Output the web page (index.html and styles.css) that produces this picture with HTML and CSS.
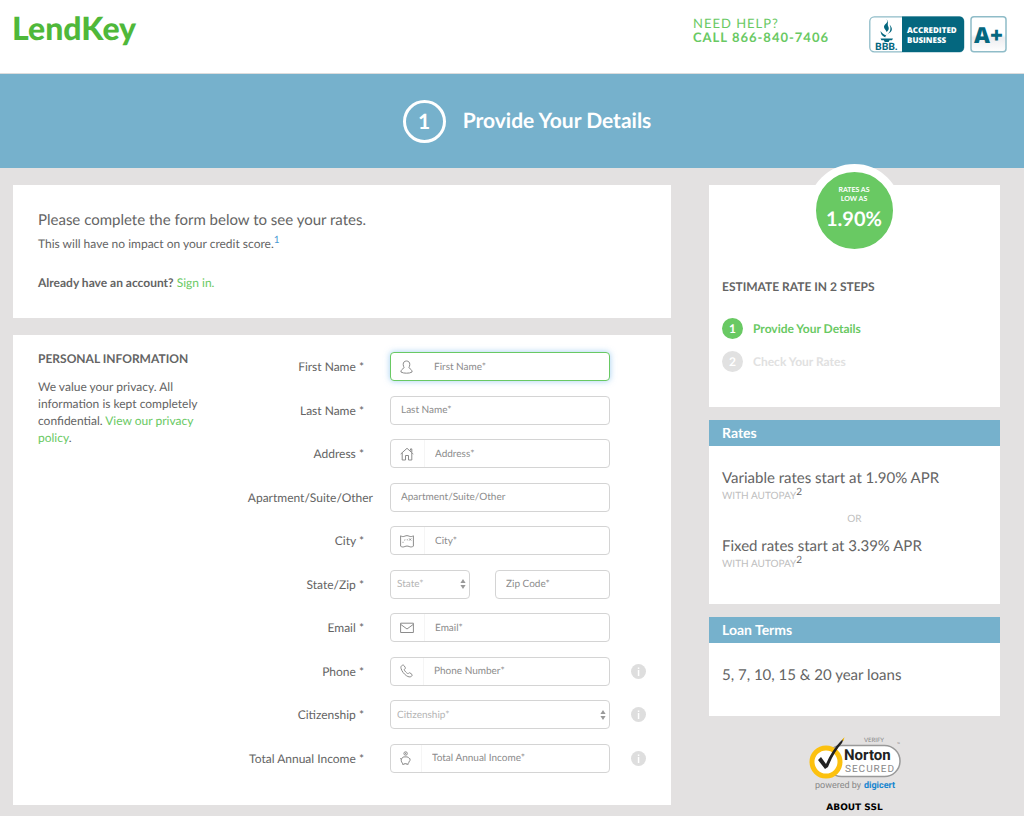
FILE: index.html
```html
<!DOCTYPE html>
<html lang="en">
<head>
    <meta charset="UTF-8">
    <meta name="viewport" content="width=device-width, initial-scale=1.0">
    <title>LendKey - Provide Your Details</title>
    <link rel="stylesheet" href="styles.css">
</head>
<body>
    <header class="header">
        <a href="#" class="logo">LendKey</a>
        <div class="header-right">
            <div class="help">
                NEED HELP?<br>
                <strong>CALL 866-840-7406</strong>
            </div>
            <a href="#" class="bbb" aria-label="BBB Accredited Business A+">
                <svg width="138" height="37" viewBox="0 0 138 37">
                    <defs>
                        <linearGradient id="shine" x1="0" y1="0" x2="0" y2="1">
                            <stop offset="0.5" stop-color="#fff"/>
                            <stop offset="0.6" stop-color="#ececef"/>
                            <stop offset="1" stop-color="#fff"/>
                        </linearGradient>
                    </defs>
                    <rect x="0.8" y="0.8" width="94" height="35" rx="4.500" fill="#fff" stroke="#8fbcc8" stroke-width="1.300"/>
                    <path d="M33 .5h57.500a4.500 4.500 0 0 1 4.500 4.500v26.500a4.500 4.500 0 0 1-4.500 4.500H33z" fill="#04677f"/>
                    <path d="M17 3c3.800 3.400-1.500 4.600-2 7.600-.3 2.400 2 3.400 2.600 5.400 2-1.700 2.800-3.400 1.700-5.600-1.400-2.700 1.200-4.800-2.300-7.400zM20.500 8.500c3 3.500 3.400 6-.3 8.600-2 1.500-3.600 2-3.900 4.200-3.600-1.400-4.300-3.200-4.800-6.200 1.600 2.400 3.300 3.700 5.800 4.200 3.600-2.800 5.400-6 3.200-10.800zM11.500 22.500h12.500l-1 1.800h-2.500l-.8 1.700h-4l-.8-1.700h-2.500z" fill="#04677f"/>
                    <text x="6" y="34" class="bbb-name">BBB.</text>
                    <text x="38" y="17" class="bbb-label">ACCREDITED</text>
                    <text x="38" y="27" class="bbb-label">BUSINESS</text>
                    <rect x="102" y="0.800" width="35" height="35" rx="3" fill="url(#shine)" stroke="#8fbcc8" stroke-width="1.500"/>
                    <text x="105" y="27" class="bbb-grade">A+</text>
                </svg>
            </a>
        </div>
    </header>

    <div class="banner">
        <span class="banner-number">1</span>
        <h1>Provide Your Details</h1>
    </div>

    <div class="page">
        <main class="content">
            <section class="card intro">
                <h2>Please complete the form below to see your rates.</h2>
                <p>This will have no impact on your credit score.<sup><a href="#" class="note">1</a></sup></p>
                <p class="signin"><strong>Already have an account?</strong> <a href="#">Sign in.</a></p>
            </section>

            <section class="card personal">
                <div class="about">
                    <h3>PERSONAL INFORMATION</h3>
                    <p>We value your privacy. All information is kept completely confidential. <a href="#">View our privacy policy</a>.</p>
                </div>

                <form class="fields">
                    <div class="row">
                        <label for="firstName">First Name *</label>
                        <div class="field active">
                            <svg class="icon" width="13" height="14" viewBox="0 0 13 14"><path d="M6.500 1C4.500 1 3.200 2.300 3.200 4.300c0 1.600.5 2.600 1 3.300C2.500 9 .9 10 .9 12c1.500.9 3.400 1.200 5.600 1.200s4.100-.3 5.600-1.200c0-2-1.600-3-3.300-4.400.5-.7 1-1.700 1-3.300C9.800 2.300 8.500 1 6.500 1z"/></svg>
                            <input type="text" id="firstName" placeholder="First Name*" autofocus>
                        </div>
                    </div>
                    <div class="row">
                        <label for="lastName">Last Name *</label>
                        <div class="field"><input type="text" id="lastName" placeholder="Last Name*"></div>
                    </div>
                    <div class="row">
                        <label for="address">Address *</label>
                        <div class="field">
                            <svg class="icon" width="14" height="14" viewBox="0 0 14 14"><path d="M.7 7 7 1.300 13.300 7M2.200 6v7h3.300V8.500h3V13h3.300V6M10.500 3.500V1.900h1.300v3.300"/></svg>
                            <input type="text" id="address" placeholder="Address*">
                        </div>
                    </div>
                    <div class="row">
                        <label for="apartment" class="optional">Apartment/Suite/Other</label>
                        <div class="field"><input type="text" id="apartment" placeholder="Apartment/Suite/Other"></div>
                    </div>
                    <div class="row">
                        <label for="city">City *</label>
                        <div class="field">
                            <svg class="icon" width="14" height="14" viewBox="0 0 14 14"><path d="M.6 1.800c1.500 1 2.800 1 4.300.3 1.500-.6 2.700-.6 4.200.1 1.500.6 2.800.5 4.300-.4v10.400c-1.500.9-2.800 1-4.300.3-1.500-.6-2.700-.6-4.200 0-1.500.7-2.800.7-4.300-.3zM9.200 4.500l2 2M11.200 4.500l-2 2M3 8.800v-1M4.300 6.200l1-.4M6.800 5.800h1"/></svg>
                            <input type="text" id="city" placeholder="City*">
                        </div>
                    </div>
                    <div class="row">
                        <label for="state">State/Zip *</label>
                        <div class="split">
                            <div class="field select">
                                <select id="state"><option>State*</option></select>
                                <svg class="arrows" width="6" height="10" viewBox="0 0 6 10"><path d="M3 0l2.600 4H.4zM3 10L.4 6h5.200z"/></svg>
                            </div>
                            <div class="field"><input type="text" id="zip" placeholder="Zip Code*" aria-label="Zip Code"></div>
                        </div>
                    </div>
                    <div class="row">
                        <label for="email">Email *</label>
                        <div class="field">
                            <svg class="icon" width="14" height="14" viewBox="0 0 14 14"><path d="M.6 2.200h12.800v9.300H.6zM.6 3.300 7 8l6.400-4.700"/></svg>
                            <input type="email" id="email" placeholder="Email*">
                        </div>
                    </div>
                    <div class="row">
                        <label for="phone">Phone *</label>
                        <div class="field">
                            <svg class="icon" width="13" height="14" viewBox="0 0 13 14"><path d="M2.500 1.200C1.200 1.700.6 3 1 4.300c.7 2.600 2.700 5.600 5.600 7.500 1.700 1.100 3.400 1.500 4.600.7.800-.5 1.300-1.400.8-2L10 8.900c-.6-.4-1 0-1.500.5-.5.300-1 .2-2-.7S4.300 6.300 4.200 5.700c0-.5.600-.7 1-1 .5-.5.300-.9 0-1.300L4.100 1.700c-.4-.6-.9-.8-1.600-.5z"/></svg>
                            <input type="tel" id="phone" placeholder="Phone Number*">
                        </div>
                        <button type="button" class="info" aria-label="Phone help"><svg width="15" height="15" viewBox="0 0 15 15"><circle cx="7.500" cy="7.500" r="7.500"/><path d="M6.800 3.500h1.500v1.500H6.800zM6.800 6h1.500v6H6.800z"/></svg></button>
                    </div>
                    <div class="row">
                        <label for="citizenship">Citizenship *</label>
                        <div class="field select">
                            <select id="citizenship"><option>Citizenship*</option></select>
                            <svg class="arrows" width="6" height="10" viewBox="0 0 6 10"><path d="M3 0l2.600 4H.4zM3 10L.4 6h5.200z"/></svg>
                        </div>
                        <button type="button" class="info" aria-label="Citizenship help"><svg width="15" height="15" viewBox="0 0 15 15"><circle cx="7.500" cy="7.500" r="7.500"/><path d="M6.800 3.500h1.500v1.500H6.800zM6.800 6h1.500v6H6.800z"/></svg></button>
                    </div>
                    <div class="row">
                        <label for="income">Total Annual Income *</label>
                        <div class="field">
                            <svg class="icon" width="11" height="14" viewBox="0 0 11 14"><circle cx="5.600" cy="2.500" r="1.700"/><path d="M5.600 1.800v1.400M4 5.800C2.500 6.300 1.200 7.500 1.200 9.200c0 1.400.5 2.300 1.300 3v1.100h1.700v-.6h2.400v.6h1.600v-1.100c.8-.6 1-1.300 1.200-2.200l.6-.6V7.700l-.8-.3C8.800 6.500 8 6 7 5.900H4M1.200 8.500C.5 8 .5 7.500.8 7"/></svg>
                            <input type="text" id="income" placeholder="Total Annual Income*">
                        </div>
                        <button type="button" class="info" aria-label="Income help"><svg width="15" height="15" viewBox="0 0 15 15"><circle cx="7.500" cy="7.500" r="7.500"/><path d="M6.800 3.500h1.500v1.500H6.800zM6.800 6h1.500v6H6.800z"/></svg></button>
                    </div>
                </form>
            </section>
        </main>

        <aside class="sidebar">
            <section class="card steps">
                <div class="rate-badge">
                    <span>RATES AS<br>LOW AS</span>
                    <strong>1.90%</strong>
                </div>
                <h3>ESTIMATE RATE IN 2 STEPS</h3>
                <ol>
                    <li class="current"><span class="dot">1</span>Provide Your Details</li>
                    <li><span class="dot">2</span>Check Your Rates</li>
                </ol>
            </section>

            <section class="card">
                <h4>Rates</h4>
                <div class="card-body">
                    <p class="rate">Variable rates start at 1.90% APR</p>
                    <p class="autopay">WITH AUTOPAY<sup>2</sup></p>
                    <p class="or">OR</p>
                    <p class="rate">Fixed rates start at 3.39% APR</p>
                    <p class="autopay">WITH AUTOPAY<sup>2</sup></p>
                </div>
            </section>

            <section class="card">
                <h4>Loan Terms</h4>
                <div class="card-body">
                    <p class="rate">5, 7, 10, 15 &amp; 20 year loans</p>
                </div>
            </section>

            <div class="seal">
                <svg width="94" height="56" viewBox="0 0 94 56" role="img" aria-label="Norton Secured">
                    <rect x="18" y="9.500" width="74" height="31" rx="15.500" fill="#fff" stroke="#999" stroke-width="1.500"/>
                    <text x="56" y="6" class="seal-verify">VERIFY</text>
                    <circle cx="18" cy="26" r="14" fill="#fff" stroke="#fcc10f" stroke-width="5"/>
                    <path d="M10 24l3-3 5 7c4-9 8-16 14-22l4-4-2 5c-6 7-10 14-14 24l-3 2z" fill="#222"/>
                    <path d="M34 4l2.500-3-1 4z" fill="#fcc10f"/>
                    <text x="36" y="24" class="seal-norton">Norton</text>
                    <text x="37" y="36" class="seal-secured">SECURED</text>
                    <text x="89" y="10" class="seal-tm">™</text>
                    <text x="7" y="52" class="seal-by">powered by</text>
                    <text x="56" y="52" class="seal-digicert">digicert</text>
                </svg>
                <a href="#">ABOUT SSL</a>
            </div>
        </aside>
    </div>
</body>
</html>
```
FILE: styles.css
```css
* {
    box-sizing: border-box;
}

body {
    margin: 0;
    font-family: Lato, sans-serif;
    font-size: 12px;
    line-height: 17px;
    text-rendering: geometricPrecision;
    color: #646464;
    background-color: #e3e1e1;
}

h1, h2, h3, h4, p, ol {
    margin: 0;
    padding: 0;
}

a {
    color: #69c963;
    text-decoration: none;
}

/* Header */
.header {
    display: flex;
    justify-content: space-between;
    min-height: 74px;
    padding: 10px 17px 0 12px;
    background: #fff;
    border-bottom: 1px solid #dcdcdc;
}

.logo {
    font-size: 32px;
    line-height: 36px;
    font-weight: 900;
    color: #4fb83a;
}

.header-right {
    display: flex;
    gap: 40px;
}

.help {
    padding-top: 6px;
    font-size: 13px;
    line-height: 14px;
    letter-spacing: 1px;
    color: #69c963;
}

.bbb {
    padding-top: 6px;
}

.bbb svg, .seal svg {
    display: block;
}

.bbb-name {
    font: 900 10px Lato, sans-serif;
    fill: #04677f;
}

.bbb-label {
    font: 800 8px "Open Sans", sans-serif;
    fill: #fff;
}

.bbb-grade {
    font: 800 22px "Open Sans", sans-serif;
    fill: #04677f;
}

/* Banner */
.banner {
    display: flex;
    align-items: center;
    justify-content: center;
    gap: 17px;
    min-height: 94px;
    padding-left: 30px;
    color: #fff;
    background: #76b1cc;
}

.banner h1 {
    font-size: 21px;
    line-height: 28px;
}

.banner-number {
    display: flex;
    align-items: center;
    justify-content: center;
    width: 43px;
    height: 43px;
    border: 3px solid #fff;
    border-radius: 50%;
    font-size: 21px;
    font-weight: bold;
}

/* Layout */
.page {
    display: flex;
    align-items: flex-start;
    gap: 38px;
    padding: 17px 24px 0 13px;
}

.content {
    flex: 658;
    min-width: 0;
}

.sidebar {
    flex: 291;
    min-width: 0;
}

.card {
    background: #fff;
}

/* Intro */
.intro {
    margin-bottom: 17px;
    padding: 25px 25px 27px;
}

.intro h2 {
    margin-bottom: 5px;
    font-size: 15px;
    line-height: 20px;
    font-weight: normal;
}

.intro .signin {
    margin-top: 22px;
}

sup {
    font-size: 10px;
    line-height: 0;
}

.note {
    color: #4a9ad4;
}

/* Form */
.personal {
    display: flex;
    align-items: flex-start;
    padding: 17px 0 32px 25px;
}

.about {
    flex: 0 0 165px;
}

.about h3 {
    margin-bottom: 12px;
    font-size: 12px;
    line-height: 14px;
}

.fields {
    display: flex;
    flex: 1;
    flex-direction: column;
    justify-content: space-between;
    min-height: 421px;
}

.row {
    display: grid;
    grid-template-columns: 1fr 220px 61px;
    align-items: center;
}

.row label {
    padding-right: 26px;
    text-align: right;
    white-space: nowrap;
}

.row .optional {
    padding-right: 17px;
}

.field {
    position: relative;
    display: flex;
    align-items: center;
    height: 29px;
    background: #fff;
    border: 1px solid #d4d4d4;
    border-radius: 4px;
}

.field.active {
    border-color: #69c963;
    box-shadow: 0 0 6px rgba(102, 175, 233, 0.6);
}

.field input, .field select {
    flex: 1;
    width: 100%;
    min-width: 0;
    height: 27px;
    padding: 0 10px;
    border: none;
    outline: none;
    background: transparent;
    font-family: inherit;
    font-size: 10px;
    text-rendering: inherit;
    color: #646464;
}

.field select {
    padding: 0 6px;
    color: #b4b4b4;
    appearance: none;
}

.field input::placeholder {
    color: #8c8c8c;
    opacity: 1;
}

.icon {
    flex: none;
    margin: 0 10px 0 9px;
    fill: none;
    stroke: #8c8c8c;
}

.field .icon + input {
    border-left: 1px solid #f5f5f5;
}

.field.active .icon + input {
    border-left-color: transparent;
}

.arrows {
    position: absolute;
    right: 3px;
    fill: #999;
    pointer-events: none;
}

.split {
    display: grid;
    grid-template-columns: 80px 1fr;
    gap: 25px;
}

.info {
    width: 15px;
    height: 15px;
    margin-left: 21px;
    padding: 0;
    border: none;
    background: none;
    cursor: pointer;
}

.info svg {
    display: block;
    fill: #dedede;
}

.info path {
    fill: #fff;
}

/* Sidebar */
.sidebar .card {
    margin-bottom: 13px;
}

.steps {
    position: relative;
    padding: 93px 13px 35px;
}

.steps h3 {
    margin-bottom: 23px;
    font-size: 12px;
    line-height: 17px;
}

.steps ol {
    display: flex;
    flex-direction: column;
    gap: 12px;
    list-style: none;
}

.steps li {
    display: flex;
    align-items: center;
    gap: 10px;
    font-weight: bold;
    color: #e1e1e1;
}

.steps li.current {
    color: #69c963;
}

.dot {
    width: 21px;
    height: 21px;
    border-radius: 50%;
    background: #e1e1e1;
    line-height: 21px;
    text-align: center;
    color: #fff;
}

.current .dot {
    background: #69c963;
}

.rate-badge {
    position: absolute;
    top: -21px;
    left: 50%;
    width: 93px;
    height: 93px;
    margin-left: -47px;
    padding-top: 14px;
    border: 8px solid #fff;
    border-radius: 50%;
    background: #69c963;
    color: #fff;
    text-align: center;
}

.rate-badge span {
    display: block;
    font-size: 7px;
    line-height: 9px;
    font-weight: bold;
}

.rate-badge strong {
    display: block;
    font-size: 20px;
    line-height: 30px;
}

.sidebar h4 {
    padding: 4px 13px;
    background: #76b1cc;
    color: #fff;
    font-size: 14px;
    line-height: 18px;
}

.card-body {
    padding: 22px 13px 31px;
}

.rate {
    font-size: 15px;
    line-height: 20px;
}

.autopay {
    font-size: 10px;
    color: #c0c0c0;
}

.autopay sup {
    color: #646464;
}

.or {
    padding: 6px 0 8px;
    font-size: 10px;
    text-align: center;
    color: #c0c0c0;
}

.seal {
    display: flex;
    flex-direction: column;
    align-items: center;
    padding-top: 7px;
}

.seal a {
    margin-top: 9px;
    font: bold 9px/14px "DejaVu Sans", sans-serif;
    color: #000;
}

.seal-verify {
    font: 6px Lato, sans-serif;
    fill: #888;
}

.seal-norton {
    font: bold 15px Roboto, sans-serif;
    fill: #222;
}

.seal-secured {
    font: 10px Roboto, sans-serif;
    letter-spacing: 1px;
    fill: #888;
}

.seal-tm {
    font: 5px Roboto, sans-serif;
    fill: #666;
}

.seal-by {
    font: 9px Roboto, sans-serif;
    fill: #888;
}

.seal-digicert {
    font: bold 9px Roboto, sans-serif;
    fill: #1685cf;
}

@media (max-width: 800px) {
    .page, .personal {
        flex-direction: column;
        align-items: stretch;
    }

    .about {
        flex: none;
        margin-bottom: 17px;
    }
}
```
